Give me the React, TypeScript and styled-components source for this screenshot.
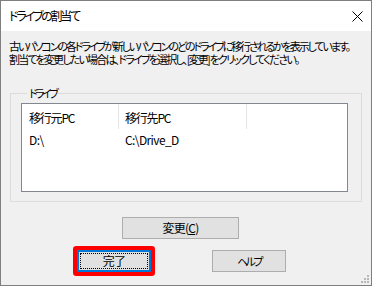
import React from 'react';
import styled, { createGlobalStyle } from 'styled-components';

// Base reset: no body margin, dialog font everywhere
const GlobalStyle = createGlobalStyle`
  html, body {
    margin: 0;
    padding: 0;
    background: #ffffff;
  }
  body {
    font-family: "Noto Sans CJK JP", "Noto Sans", sans-serif;
    font-size: 12px;
    color: #000000;
  }
  * {
    box-sizing: border-box;
  }
`;

const Window = styled.div`
  position: relative;
  width: 372px;
  height: 286px;
  border: 1px solid #7f7f7f;
  background: #f0f0f0;
  display: flex;
  flex-direction: column;
`;

const TitleBar = styled.div`
  height: 30px;
  flex: none;
  background: #ffffff;
  display: flex;
  align-items: center;
  justify-content: space-between;
  padding: 0 8px;
`;

const Title = styled.span`
  font-size: 12px;
  line-height: 16px;
  font-feature-settings: "palt";
  letter-spacing: -2.2px;
`;

const CloseIcon = styled.svg`
  display: block;
  width: 11px;
  height: 11px;
`;

const Body = styled.div`
  flex: 1;
  padding: 9px 8px 0 8px;
  display: flex;
  flex-direction: column;
`;

const Message = styled.div`
  display: flex;
  flex-direction: column;
`;

const MessageLine = styled.p<{ $tracking: number }>`
  margin: 0;
  height: 13px;
  font-size: 11px;
  line-height: 13px;
  font-feature-settings: "palt";
  letter-spacing: ${(p) => p.$tracking}px;
  white-space: nowrap;
`;

const Group = styled.fieldset`
  margin: 20px 0 0 1px;
  width: 352px;
  border: 1px solid #dcdcdc;
  padding: 3px 13px 9px 10px;
  min-width: 0;
`;

const Legend = styled.legend`
  margin-left: 6px;
  padding: 0 2px;
  font-size: 11px;
  line-height: 14px;
  font-feature-settings: "palt";
  letter-spacing: -2.6px;
`;

const ListView = styled.div`
  height: 89px;
  border: 1px solid #828790;
  background: #ffffff;
  display: flex;
  flex-direction: column;
`;

const Row = styled.div<{ $header?: boolean }>`
  display: flex;
  height: ${(p) => (p.$header ? '25px' : '19px')};
`;

const Cell = styled.div<{ $width?: number; $pad: number; $header?: boolean; $sep?: boolean }>`
  flex: ${(p) => (p.$width ? `0 0 ${p.$width}px` : '1')};
  padding-left: ${(p) => p.$pad}px;
  padding-top: ${(p) => (p.$header ? '2px' : '1px')};
  line-height: ${(p) => (p.$header ? '23px' : '19px')};
  border-right: ${(p) => (p.$sep ? '1px solid #e5e5e5' : 'none')};
  font-size: 12px;
  letter-spacing: ${(p) => (p.$header ? '-1.2px' : '-0.6px')};
  white-space: nowrap;
  font-feature-settings: "palt";
`;

const ButtonRow = styled.div<{ $top: number; $left: number }>`
  display: flex;
  gap: 61px;
  margin-top: ${(p) => p.$top}px;
  padding-left: ${(p) => p.$left}px;
`;

const Button = styled.button<{ $width: number; $default?: boolean; $tight?: boolean }>`
  position: relative;
  width: ${(p) => p.$width}px;
  height: 22px;
  padding: 0;
  background: #e1e1e1;
  border: ${(p) => (p.$default ? '2px solid #0078d7' : '1px solid #adadad')};
  border-radius: ${(p) => (p.$default ? '1px' : '0')};
  box-shadow: ${(p) => (p.$default ? '0 0 0 4px #ff0000' : 'none')};
  font-family: inherit;
  font-size: ${(p) => (p.$tight ? '11px' : '12px')};
  line-height: 18px;
  color: #000000;
  font-feature-settings: "palt";
  letter-spacing: ${(p) => (p.$tight ? '-2.6px' : '-0.8px')};

  &::after {
    content: '';
    display: ${(p) => (p.$default ? 'block' : 'none')};
    position: absolute;
    inset: 1px;
    border: 1px dotted #000000;
  }
`;

const Mnemonic = styled.span`
  text-decoration: underline;
`;

const Grip = styled.svg`
  position: absolute;
  right: 2px;
  bottom: 2px;
  width: 8px;
  height: 8px;
`;

export default function App() {
  return (
    <>
      <GlobalStyle />
      <Window>
        <TitleBar>
          <Title>ドライブの割当て</Title>
          <CloseIcon viewBox="0 0 11 11">
            <path d="M0.5 0.5 L10.5 10.5 M10.5 0.5 L0.5 10.5" stroke="#000" strokeWidth="1" />
          </CloseIcon>
        </TitleBar>
        <Body>
          <Message>
            <MessageLine $tracking={-2.1}>
              古いパソコンの各ドライブが新しいパソコンのどのドライブに移行されるかを表示しています。
            </MessageLine>
            <MessageLine $tracking={-1.8}>
              割当てを変更したい場合は、ドライブを選択し、[変更] をクリックしてください。
            </MessageLine>
          </Message>
          <Group>
            <Legend>ドライブ</Legend>
            <ListView>
              <Row $header>
                <Cell $header $width={97} $pad={7} $sep>移行元PC</Cell>
                <Cell $header $width={128} $pad={6} $sep>移行先PC</Cell>
                <Cell $header $pad={6} />
              </Row>
              <Row>
                <Cell $width={97} $pad={7}>D:\</Cell>
                <Cell $width={128} $pad={6}>C:\Drive_D</Cell>
              </Row>
            </ListView>
          </Group>
          <ButtonRow $top={15} $left={113}>
            <Button $width={117}>
              変更(<Mnemonic>C</Mnemonic>)
            </Button>
          </ButtonRow>
          <ButtonRow $top={11} $left={68}>
            <Button $width={74} $default>完了</Button>
            <Button $width={74} $tight>ヘルプ</Button>
          </ButtonRow>
        </Body>
        <Grip viewBox="0 0 8 8">
          <g fill="#b8b8b8">
            <rect x="6" y="0" width="2" height="2" />
            <rect x="3" y="3" width="2" height="2" />
            <rect x="6" y="3" width="2" height="2" />
            <rect x="0" y="6" width="2" height="2" />
            <rect x="3" y="6" width="2" height="2" />
            <rect x="6" y="6" width="2" height="2" />
          </g>
        </Grip>
      </Window>
    </>
  );
}
